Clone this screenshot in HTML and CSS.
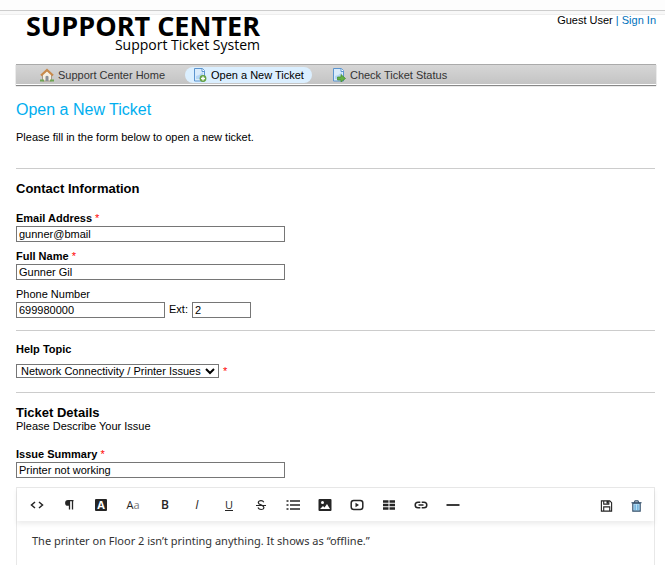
FILE: index.html
```html
<!DOCTYPE html>
<html lang="en">
<head>
<meta charset="utf-8">
<meta name="viewport" content="width=device-width, initial-scale=1">
<title>Support Center - Open a New Ticket</title>
<link rel="stylesheet" href="styles.css">
</head>
<body>
<div class="window-edge"></div>
<div class="page">
  <header class="header">
    <div class="logo">
      <div class="logo-title">SUPPORT CENTER</div>
      <div class="logo-sub">Support Ticket System</div>
    </div>
    <div class="account">Guest User <span class="bar">|</span> <a href="#signin">Sign In</a></div>
  </header>

  <nav class="nav">
    <a href="#home">
      <svg width="14" height="14" viewBox="0 0 14 14"><path d="M2.500 6.500 7 2.500l4.500 4V13h-9z" fill="#f5efe3" stroke="#a99a86"/><path d="M1 7.500 7 2l6 5.500" fill="none" stroke="#c98a4b" stroke-width="2.200"/><path d="M5.500 13V8.500q1.500-1.500 3 0V13z" fill="#8a8f98"/><path d="M0 12.500h4M10 12.500h4" stroke="#6da552" stroke-width="2"/></svg>
      <span>Support Center Home</span>
    </a>
    <a href="#open" class="active">
      <svg width="14" height="14" viewBox="0 0 14 14"><path d="M1.500.5h8l2 2v10.500h-10z" fill="#d9ebfb" stroke="#5b94cf"/><path d="M3 8q4-1 7-4v7H3z" fill="#b4d6f5"/><path d="M9 .5v3h3" fill="#fff" stroke="#5b94cf"/><circle cx="10" cy="10.500" r="3.400" fill="#64a243"/><path d="M10 8.500v4M8 10.500h4" stroke="#fff" stroke-width="1.400"/></svg>
      <span>Open a New Ticket</span>
    </a>
    <a href="#status">
      <svg width="14" height="14" viewBox="0 0 14 14"><path d="M1.500.5h8l2 2v10.500h-10z" fill="#d9ebfb" stroke="#5b94cf"/><path d="M3 8q4-1 7-4v7H3z" fill="#b4d6f5"/><path d="M9 .5v3h3" fill="#fff" stroke="#5b94cf"/><path d="M5.500 9H9V6.500l4.500 4-4.500 3.500V12H5.500z" fill="#64b043" stroke="#3f8a2b" stroke-width=".7"/></svg>
      <span>Check Ticket Status</span>
    </a>
  </nav>

  <main class="content">
    <h1>Open a New Ticket</h1>
    <p class="intro">Please fill in the form below to open a new ticket.</p>
    <form class="form">
      <section class="section">
        <h2>Contact Information</h2>
        <div class="fields">
          <div class="field">
            <label class="required" for="email">Email Address <span class="star">*</span></label>
            <input class="wide" id="email" type="text" value="gunner@bmail">
          </div>
          <div class="field">
            <label class="required" for="name">Full Name <span class="star">*</span></label>
            <input class="wide" id="name" type="text" value="Gunner Gil">
          </div>
          <div class="field">
            <label for="phone">Phone Number</label>
            <div class="phone-row">
              <input class="phone" id="phone" type="tel" value="699980000">
              <label for="ext">Ext:</label>
              <input class="ext" id="ext" type="text" value="2">
            </div>
          </div>
        </div>
      </section>

      <section class="section topic">
        <label class="required" for="topic">Help Topic</label>
        <div class="topic-row">
          <span class="select">
            <select id="topic"><option>Network Connectivity / Printer Issues</option></select>
            <svg width="10" height="7" viewBox="0 0 10 7"><path d="m1 1 4 4 4-4" fill="none" stroke="#000" stroke-width="2"/></svg>
          </span>
          <span class="star">*</span>
        </div>
      </section>

      <section class="section details">
        <h2>Ticket Details</h2>
        <p>Please Describe Your Issue</p>
        <div class="field summary">
          <label class="required" for="summary">Issue Summary <span class="star">*</span></label>
          <input class="wide" id="summary" type="text" value="Printer not working">
        </div>
        <div class="editor">
          <div class="toolbar">
            <button type="button" aria-label="HTML"><svg viewBox="0 0 14 14"><path d="M5 4 1.500 7 5 10M9 4l3.500 3L9 10" fill="none" stroke="currentColor" stroke-width="1.500"/></svg></button>
            <button type="button" aria-label="Format"><svg viewBox="0 0 14 14"><path d="M10.500 2.500v9M7.500 2.500v9M11.500 2.700H6" fill="none" stroke="currentColor" stroke-width="1.300"/><path d="M7.500 2H6a2.900 2.900 0 0 0 0 5.800h1.500z" fill="currentColor"/></svg></button>
            <button type="button" aria-label="Color"><span class="swatch">A</span></button>
            <button type="button" aria-label="Font"><span class="glyph font">A<span class="light">a</span></span></button>
            <button type="button" aria-label="Bold"><span class="glyph bold">B</span></button>
            <button type="button" aria-label="Italic"><span class="glyph italic">I</span></button>
            <button type="button" aria-label="Underline"><span class="glyph underline">U</span></button>
            <button type="button" aria-label="Strikethrough"><svg viewBox="0 0 14 14"><path d="M9.800 4.300C9.300 3.200 8.300 2.700 7 2.700c-1.600 0-2.700.8-2.700 2 0 1 .8 1.600 2.700 2.200 2 .7 2.900 1.300 2.900 2.500 0 1.300-1.100 2.100-2.800 2.100-1.500 0-2.600-.7-3.100-1.900" fill="none" stroke="currentColor" stroke-width="1.200"/><path d="M2 7.500h10" stroke="currentColor"/></svg></button>
            <button type="button" aria-label="List"><svg viewBox="0 0 14 14"><path d="M4 3h10M4 7h10M4 11h10M.5 3h2M.5 7h2M.5 11h2" stroke="currentColor" stroke-width="1.600"/></svg></button>
            <button type="button" aria-label="Image"><svg viewBox="0 0 14 14"><rect x=".5" y="1" width="13" height="12" rx="1" fill="currentColor"/><circle cx="4.500" cy="4.500" r="1.500" fill="#fff"/><path d="m2 11 3-3 1.500 1.500L9 6l3 5z" fill="#fff"/></svg></button>
            <button type="button" aria-label="Video"><svg viewBox="0 0 14 14"><rect x="1.200" y="2.500" width="11.600" height="9" rx="2.500" fill="none" stroke="currentColor" stroke-width="1.500"/><path d="m5.500 4.700 3.500 2.300-3.500 2.300z" fill="currentColor"/></svg></button>
            <button type="button" aria-label="Table"><svg viewBox="0 0 14 14"><path d="M1 3.500h5.500M7.500 3.500H13M1 7h5.500M7.500 7H13M1 10.500h5.500M7.500 10.500H13" stroke="currentColor" stroke-width="2.500"/></svg></button>
            <button type="button" aria-label="Link"><svg viewBox="0 0 14 14"><path d="M6.300 4.200H4a2.800 2.800 0 0 0 0 5.600h2.300M7.700 4.200H10a2.800 2.800 0 0 1 0 5.600H7.700M4.500 7h5" fill="none" stroke="currentColor" stroke-width="1.500"/></svg></button>
            <button type="button" aria-label="Line"><svg viewBox="0 0 14 14"><path d="M.5 7h13" stroke="currentColor" stroke-width="1.800"/></svg></button>
            <span class="spacer"></span>
            <button type="button" class="low" aria-label="Save draft"><svg viewBox="0 0 14 14"><path d="M1.500 2h9l2 2v9h-11zM4 2v3.500h5.500V2M4 13V8.500h6.500V13" fill="none" stroke="currentColor" stroke-width="1.200"/><path d="M7 2h2v3H7z" fill="currentColor"/></svg></button>
            <button type="button" class="low delete" aria-label="Delete draft"><svg viewBox="0 0 14 14"><path d="M3 4.500h8v8.500H3z" fill="#b9e0f7" stroke="currentColor" stroke-width="1.200"/><path d="M1.500 4h11M4.700 3.500 5.500 2h3l.8 1.500" fill="none" stroke="currentColor" stroke-width="1.200"/><path d="M5.500 6v6M8.500 6v6" stroke="#2b86c5" stroke-width=".8"/></svg></button>
          </div>
          <div class="editor-body" contenteditable="true" role="textbox" aria-label="Issue details" spellcheck="false">The printer on Floor 2 isn’t printing anything. It shows as “offline.”</div>
        </div>
      </section>
    </form>
  </main>
</div>
</body>
</html>
```
FILE: styles.css
```css
* {
  box-sizing: border-box;
}

body {
  margin: 0;
  min-height: 100vh;
  display: flex;
  flex-direction: column;
  background: #fff;
  color: #000;
  font-family: "Liberation Sans", Arial, sans-serif;
  font-size: 11px;
  line-height: 15px;
}

h1, h2, p {
  margin: 0;
}

.window-edge {
  height: 15px;
  background: linear-gradient(#fdfdfd 10px, #ccc 10px, #ccc 11px, #f8f8f8 11px, #f8f8f8 14px, #eee 14px);
}

.page, .content, .form, .details, .editor {
  display: flex;
  flex-direction: column;
  flex: 1;
}

.page {
  padding: 0 9px 0 16px;
}

.content {
  padding-right: 1px;
}

.header {
  display: flex;
  justify-content: space-between;
  height: 49px;
}

.logo {
  padding-left: 10px;
  text-align: right;
  font-family: "Open Sans", "Noto Sans", sans-serif;
}

.logo-title {
  font-size: 27px;
  font-weight: 700;
  line-height: 22px;
}

.logo-sub {
  font-size: 14px;
  line-height: 15px;
}

.account {
  line-height: 11px;
}

.account a, .bar {
  color: #0072bc;
  text-decoration: none;
}

.nav {
  display: flex;
  align-items: center;
  gap: 12px;
  height: 21px;
  padding: 1px 0 0 16px;
  background: linear-gradient(#d6d6d6, #c4c4c4);
  border-top: 1px solid #aaa;
  border-bottom: 1px solid #fff;
  box-shadow: 0 1px 1px #888;
}

.nav a {
  display: flex;
  align-items: center;
  gap: 4px;
  height: 16px;
  padding: 0 8px;
  border-radius: 10px;
  color: #333;
  text-decoration: none;
}

.nav .active {
  background: #dbefff;
  color: #000;
}

h1 {
  margin-top: 15px;
  color: #00aeef;
  font-size: 16px;
  font-weight: 400;
  line-height: 20px;
}

.intro {
  margin: 10px 0 23px;
}

.section {
  border-top: 1px solid #ccc;
}

h2 {
  font-size: 13px;
  line-height: 15px;
}

.section > h2 {
  margin-top: 12px;
}

.fields {
  display: flex;
  flex-direction: column;
  gap: 7px;
  margin: 15px 0 12px;
}

.field {
  display: flex;
  flex-direction: column;
  align-items: flex-start;
}

.required {
  font-weight: 700;
}

.star {
  color: #f00;
  font-weight: 400;
}

input, select {
  height: 16px;
  margin: 0;
  padding: 0 2px;
  border: 1px solid #767676;
  border-radius: 0;
  background: #fff;
  color: #000;
  font: inherit;
}

.wide {
  width: 269px;
}

.phone-row {
  display: flex;
  gap: 4px;
}

.phone {
  width: 149px;
}

.ext {
  width: 59px;
}

.topic {
  padding: 11px 0 14px;
}

.topic-row {
  display: flex;
  align-items: center;
  gap: 4px;
  height: 14px;
  margin-top: 7px;
}

.select {
  display: grid;
  align-items: center;
}

.select > * {
  grid-area: 1 / 1;
}

.select select {
  appearance: none;
  height: 14px;
  padding: 0 17px 0 4px;
  line-height: 12px;
}

.select svg {
  justify-self: end;
  margin-right: 4px;
  pointer-events: none;
}

.details > p {
  line-height: 13px;
}

.summary {
  margin: 14px 0 9px;
}

.editor {
  border: 1px solid #e8e8e8;
  border-bottom: 0;
}

.toolbar {
  display: flex;
  align-items: center;
  height: 33px;
  padding: 0 3px 0 4px;
  box-shadow: 0 3px 5px rgba(0, 0, 0, .08);
}

.toolbar button {
  display: flex;
  align-items: center;
  justify-content: center;
  width: 32px;
  height: 32px;
  padding: 0;
  border: 0;
  background: none;
  color: #252525;
}

.toolbar svg {
  width: 14px;
  height: 14px;
}

.toolbar .low {
  width: 30px;
  padding-top: 2px;
}

.toolbar .low svg {
  width: 13px;
  height: 13px;
}

.toolbar .delete {
  color: #35506b;
}

.spacer {
  flex: 1;
}

.glyph, .swatch {
  font-family: "Open Sans", sans-serif;
  font-size: 12px;
  font-weight: 400;
  line-height: 12px;
}

.swatch {
  width: 12px;
  border-radius: 1px;
  background: #252525;
  color: #fff;
  font-size: 11px;
  font-weight: 700;
}

.font {
  font-size: 11px;
}

.light {
  color: #777;
}

.bold {
  font-weight: 600;
}

.italic {
  font-style: italic;
}

.underline {
  border-bottom: 1px solid;
  font-size: 11px;
  line-height: 11px;
}

.editor-body {
  flex: 1;
  padding: 12px 15px;
  color: #333;
  font-family: "Trebuchet MS", "Noto Sans", sans-serif;
  font-size: 11px;
  line-height: 16px;
  outline: 0;
}
```
